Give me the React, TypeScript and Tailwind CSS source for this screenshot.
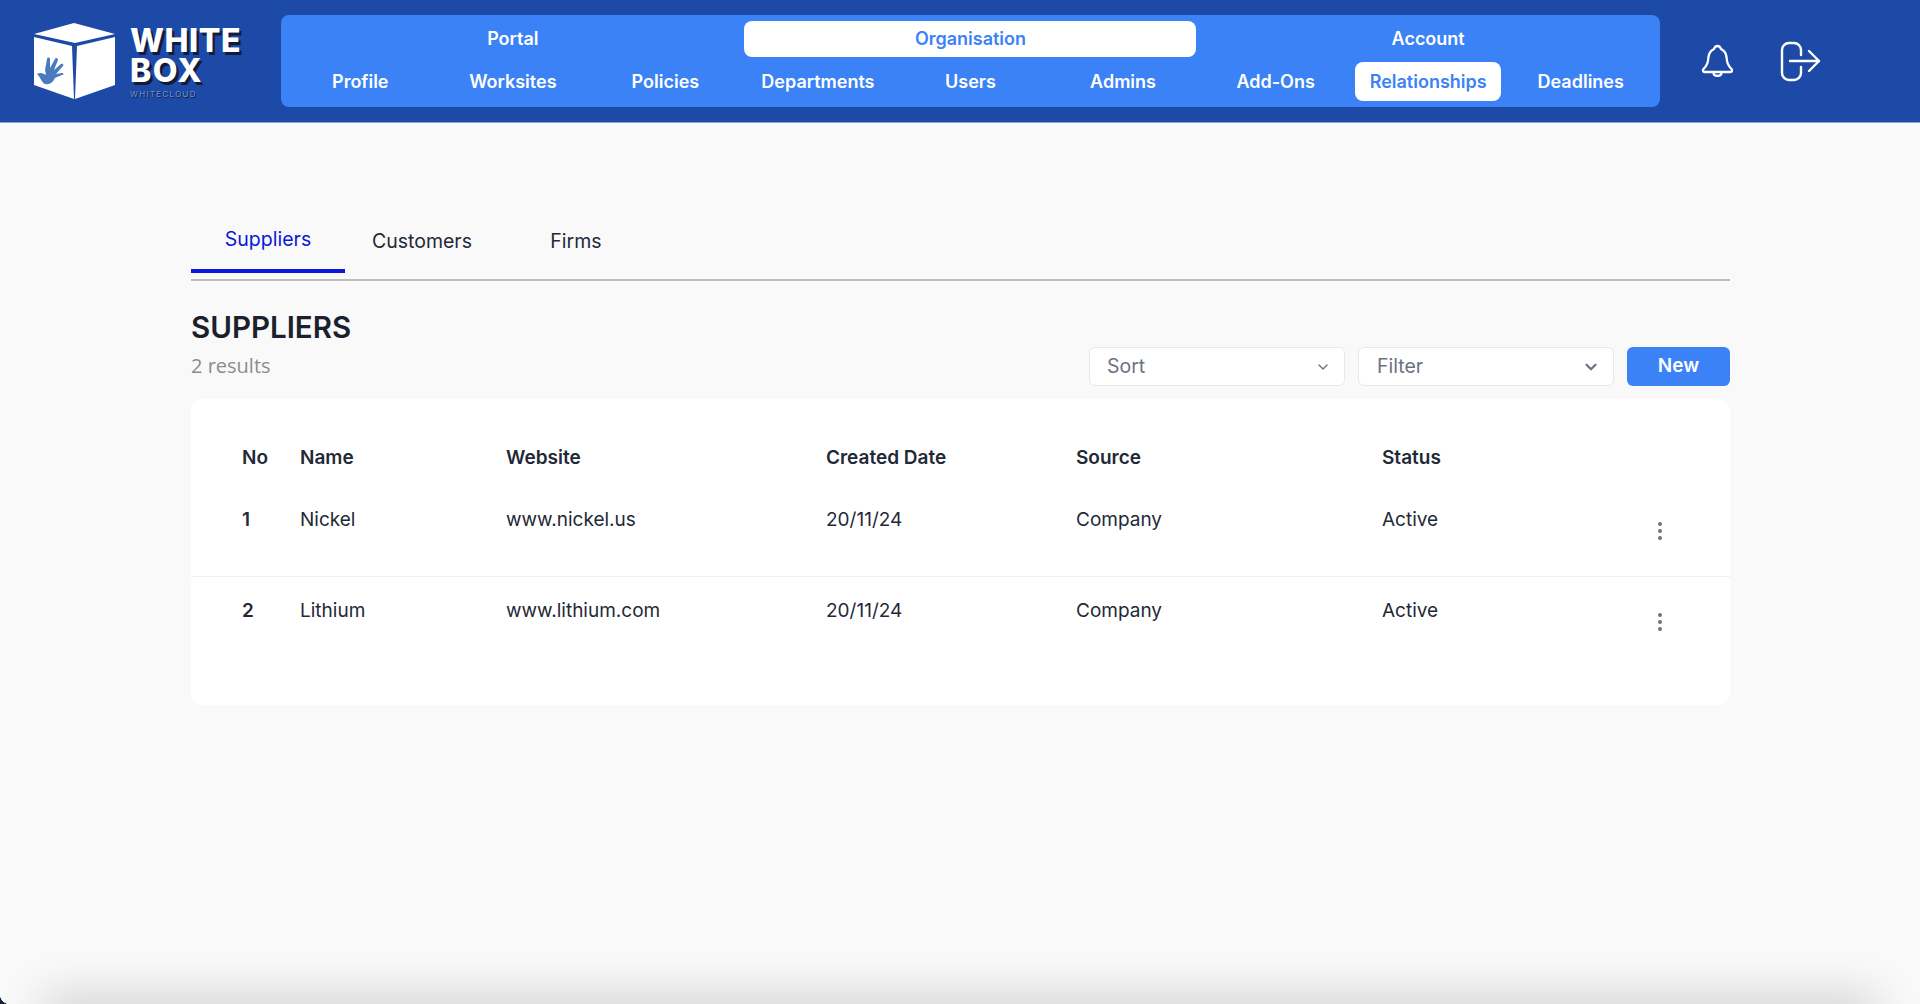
import React from "react";
import { ChevronDown, MoreVertical } from "lucide-react";

const rowOne = ["Profile", "Worksites", "Policies", "Departments", "Users", "Admins", "Add-Ons", "Relationships", "Deadlines"];
const cols = "grid-cols-[58px_206px_320px_250px_306px_266px_1fr]";

function Logo() {
  return (
    <div className="flex items-start w-[281px] pl-[33px] pt-[22px]">
      <svg width="84" height="78" viewBox="0 0 84 78" className="shrink-0">
        <polygon points="1,12 41,1 82,12 42,21" fill="#fff" />
        <polygon points="1,15 39,24 41,77 1,63" fill="#fff" />
        <polygon points="44,24 82,15 82,63 42,77" fill="#fff" />
        <path d="M4 52c3 -2 6 -1 9 1l-1 -5 2 -11c0 -2 3 -2 3 0l0 9 5 -9c1 -2 3 -1 3 1l-4 10 7 -6c2 -1 3 1 2 2l-7 8 6 -1c2 0 2 2 0 2l-7 3c-2 4 -5 7 -10 6 -3 -1 -4 -6 -8 -10z" fill="#4a7abf" />
      </svg>
      <div className="ml-[13px] mt-[4px] flex flex-col font-['Inter',sans-serif] font-extrabold text-white text-[32px] leading-[30px] [text-shadow:2.5px_2.5px_0_#111c3a] tracking-[0.6px]">
        <span>WHITE</span>
        <span className="tracking-[1.6px]">BOX</span>
        <span className="mt-[3px] text-[8px] leading-[10px] font-normal tracking-[1.3px] text-[#6f93c9] [text-shadow:1px_1px_0_#111c3a]">WHITECLOUD</span>
      </div>
    </div>
  );
}

function BellIcon() {
  return (
    <svg width="33" height="36" viewBox="0 0 33 36" fill="none" stroke="#fff" strokeWidth="2.3" strokeLinecap="round" strokeLinejoin="round">
      <path d="M16.5 2c-2 0-3 1.500-3.500 3-3 1.500-5 4-5.500 8-.5 5-1 8-5 12-1 1.500-.5 3 1 3h26c1.500 0 2-1.500 1-3-4-4-4.500-7-5-12-.5-4-2.500-6.500-5.500-8-.5-1.500-1.500-3-3.500-3z" />
      <path d="M12.500 28.500c0 4.500 8 4.500 8 0" />
    </svg>
  );
}

function LogoutIcon() {
  return (
    <svg width="42" height="41" viewBox="0 0 42 41" fill="none" stroke="#fff" strokeWidth="2.4" strokeLinecap="round" strokeLinejoin="round">
      <path d="M21 14V9a7 7 0 0 0-7-7h-5a7 7 0 0 0-7 7v23a7 7 0 0 0 7 7h5a7 7 0 0 0 7-7v-6" />
      <path d="M10 20h29" />
      <path d="M29 10l10 10-10 10" />
    </svg>
  );
}

function Row({ no, name, site }: { no: string; name: string; site: string }) {
  return (
    <div className={`grid ${cols} h-[91px] pl-[51px] text-[19px] text-[#1f2937]`}>
      <div className="pt-[20px] font-semibold leading-[28px]">{no}</div>
      <div className="pt-[20px] leading-[28px]">{name}</div>
      <div className="pt-[20px] leading-[28px]">{site}</div>
      <div className="pt-[20px] leading-[28px]">20/11/24</div>
      <div className="pt-[20px] leading-[28px]">Company</div>
      <div className="pt-[20px] leading-[28px]">Active</div>
      <div className="pt-[33px]">
        <MoreVertical size={24} strokeWidth={2} className="text-[#6b7280]" />
      </div>
    </div>
  );
}

export default function App() {
  return (
    <div className="relative h-[1004px] w-[1920px] overflow-hidden bg-[#f9f9f9] font-['Inter',sans-serif]">
      <header className="flex h-[123px] bg-[#1e4aa7] border-b border-[#8aa3d8]">
        <Logo />
        <nav className="mt-[15px] h-[92px] w-[1379px] rounded-[8px] bg-[#3b82f6] px-[3px] pt-[6px]">
          <div className="grid grid-cols-3 h-[36px] text-[18px] leading-[34px] font-semibold">
            <div className="flex items-center justify-center text-white">Portal</div>
            <div className="flex items-center justify-center">
              <div className="flex h-[36px] w-[452px] items-center justify-center rounded-[8px] bg-white text-[#3b82f6]">Organisation</div>
            </div>
            <div className="flex items-center justify-center text-white">Account</div>
          </div>
          <div className="mt-[5px] grid grid-cols-9 text-[18px] font-semibold text-white">
            {rowOne.map((t) => (
              <div key={t} className="flex h-[39px] items-center justify-center">
                {t === "Relationships" ? (
                  <div className="flex h-[39px] w-[146px] shrink-0 items-center justify-center rounded-[8px] bg-white text-[#3b82f6]">{t}</div>
                ) : t}
              </div>
            ))}
          </div>
        </nav>
        <div className="flex items-start pl-[41px] pt-[44px]">
          <BellIcon />
          <div className="ml-[46px] -mt-[3px]"><LogoutIcon /></div>
        </div>
      </header>

      <main className="pl-[191px] pr-[190px]">
        <div className="mt-[85px] flex h-[73px] items-end border-b-2 border-[#bdbdbd] text-[19.5px]">
          <div className="mb-[6px] flex h-[57px] w-[154px] items-start justify-center border-b-4 border-[#0a18d6] pt-[9px] text-[#0a18d6]">Suppliers</div>
          <div className="mb-[6px] flex h-[57px] w-[154px] items-start justify-center pt-[11px] text-[#1f2937]">Customers</div>
          <div className="mb-[6px] flex h-[57px] w-[154px] items-start justify-center pt-[11px] text-[#1f2937]">Firms</div>
        </div>
        <div className="flex h-[77px] items-end justify-between mt-[28px]">
          <div className="self-start">
            <h1 className="text-[29.5px] leading-[36px] font-semibold text-[#1a202c]">SUPPLIERS</h1>
            <p className="mt-[7px] text-[20px] leading-[28px] font-['Open_Sans',sans-serif] text-[#8c8c8c]">2 results</p>
          </div>
          <div className="flex gap-[13px]">
            <div className="flex h-[39px] w-[256px] items-center justify-between rounded-[6px] border border-[#e8e8e8] bg-white pl-[17px] pr-[13px] text-[19.5px] text-[#6b7280]">
              Sort <ChevronDown size={16} strokeWidth={2} />
            </div>
            <div className="flex h-[39px] w-[256px] items-center justify-between rounded-[6px] border border-[#e8e8e8] bg-white pl-[18px] pr-[13px] text-[19.5px] text-[#6b7280]">
              Filter <ChevronDown size={18} strokeWidth={3} />
            </div>
            <button className="flex h-[39px] w-[103px] items-center justify-center rounded-[6px] bg-[#3b82f6] text-[19px] font-semibold text-white">New</button>
          </div>
        </div>
        <section className="mt-[13px] h-[306px] rounded-[12px] bg-white pt-[41px]">
          <div className={`grid ${cols} h-[36px] items-center pl-[51px] text-[19px] font-semibold text-[#1f2937]`}>
            <div>No</div><div>Name</div><div>Website</div><div>Created Date</div><div>Source</div><div>Status</div><div />
          </div>
          <div className="mt-[10px]">
            <div className="h-[91px] border-b border-[#f0f0f0]"><Row no="1" name="Nickel" site="www.nickel.us" /></div>
            <Row no="2" name="Lithium" site="www.lithium.com" />
          </div>
        </section>
      </main>

      <div className="absolute -bottom-[30px] left-[50px] right-[50px] h-[30px] rounded-[20px] shadow-[0_0_45px_12px_rgba(0,0,0,0.14)]" />
      <div className="absolute bottom-0 left-0 h-[10px] w-[10px] bg-[radial-gradient(circle_at_100%_0,transparent_10px,#1a2238_10.5px)]" />
    </div>
  );
}
